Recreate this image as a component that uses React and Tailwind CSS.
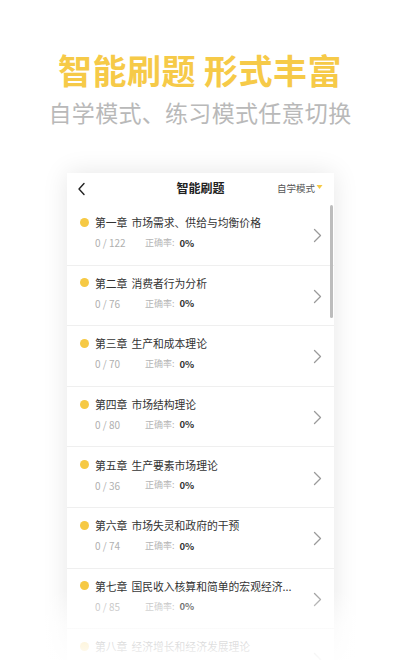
import React from "react";

const chapters = [
  ["第一章", "市场需求、供给与均衡价格", "0 / 122"],
  ["第二章", "消费者行为分析", "0 / 76"],
  ["第三章", "生产和成本理论", "0 / 70"],
  ["第四章", "市场结构理论", "0 / 80"],
  ["第五章", "生产要素市场理论", "0 / 36"],
  ["第六章", "市场失灵和政府的干预", "0 / 74"],
  ["第七章", "国民收入核算和简单的宏观经济...", "0 / 85"],
  ["第八章", "经济增长和经济发展理论", "0 / 90"],
];

function Chevron() {
  return (
    <svg width="9" height="15" viewBox="0 0 9 15" fill="none">
      <polyline points="1.5,1.5 7.5,7.5 1.5,13.5" stroke="#9a9a9a" strokeWidth="1.3" strokeLinecap="round" strokeLinejoin="round" />
    </svg>
  );
}

export default function App() {
  return (
    <div
      className="relative w-[400px] h-[660px] overflow-hidden bg-white"
      style={{ fontFamily: '"Noto Sans CJK SC", "Noto Sans", sans-serif' }}
    >
      <div className="flex flex-col items-center pt-[48px]">
        <div className="text-[34px] leading-[44px] font-bold text-[#f6ca48] tracking-[0.5px]">
          智能刷题 形式丰富
        </div>
        <div className="mt-[4px] text-[23px] leading-[32px] text-[#b9b9b9] tracking-[0.3px]">
          自学模式、练习模式任意切换
        </div>
      </div>

      <div className="absolute left-[67px] top-[173px] w-[267px] h-[520px] bg-white shadow-[0_0_24px_rgba(0,0,0,0.1)]">
        <div className="relative h-[32px] flex items-center justify-center">
          <svg className="absolute left-[10px] top-[9px]" width="9" height="14" viewBox="0 0 9 14" fill="none">
            <polyline points="7,1.5 2,7 7,12.5" stroke="#222" strokeWidth="1.4" strokeLinecap="round" strokeLinejoin="round" />
          </svg>
          <span className="text-[12px] font-bold text-[#222] mt-[-2px]">智能刷题</span>
          <div className="absolute right-[11px] top-[8px] flex items-center">
            <span className="text-[9.5px] text-[#555]">自学模式</span>
            <svg width="7" height="6" viewBox="0 0 7 6" className="ml-[1px] mt-[-2px]">
              <polygon points="0.5,1 6.5,1 3.5,5" fill="#f6c944" />
            </svg>
          </div>
        </div>

        <div className="relative">
          <div className="absolute right-[1px] top-[0px] w-[3px] h-[113px] rounded-full bg-[#bdbdbd]" />
          {chapters.map(([num, name, count], i) => (
            <div key={i} className="h-[60.6px] border-b border-[#efefef] flex items-center pl-[13px] pr-[10px]">
              <div className="flex-1 min-w-0 flex flex-col">
                <div className="flex items-center h-[16px] mt-[-5px]">
                  <span className="w-[9px] h-[9px] rounded-full bg-[#f6c944] shrink-0" />
                  <span className="ml-[6px] text-[10.8px] text-[#333] whitespace-nowrap">
                    {num}<span className="ml-[4px]">{name}</span>
                  </span>
                </div>
                <div className="flex items-center mt-[5px] pl-[15px]">
                  <span className="w-[50px] text-[10px] text-[#b0b0b0]">{count}</span>
                  <span className="text-[9px] text-[#b5b5b5]">正确率:</span>
                  <span className="ml-[5px] text-[9.5px] font-bold text-[#333]">0%</span>
                </div>
              </div>
              <div className="mr-[2px] mt-[2px]">
                <Chevron />
              </div>
            </div>
          ))}
        </div>
      </div>

      <div className="absolute left-0 right-0 bottom-0 h-[70px] bg-gradient-to-b from-white/0 via-white/70 to-white/95" />
    </div>
  );
}
